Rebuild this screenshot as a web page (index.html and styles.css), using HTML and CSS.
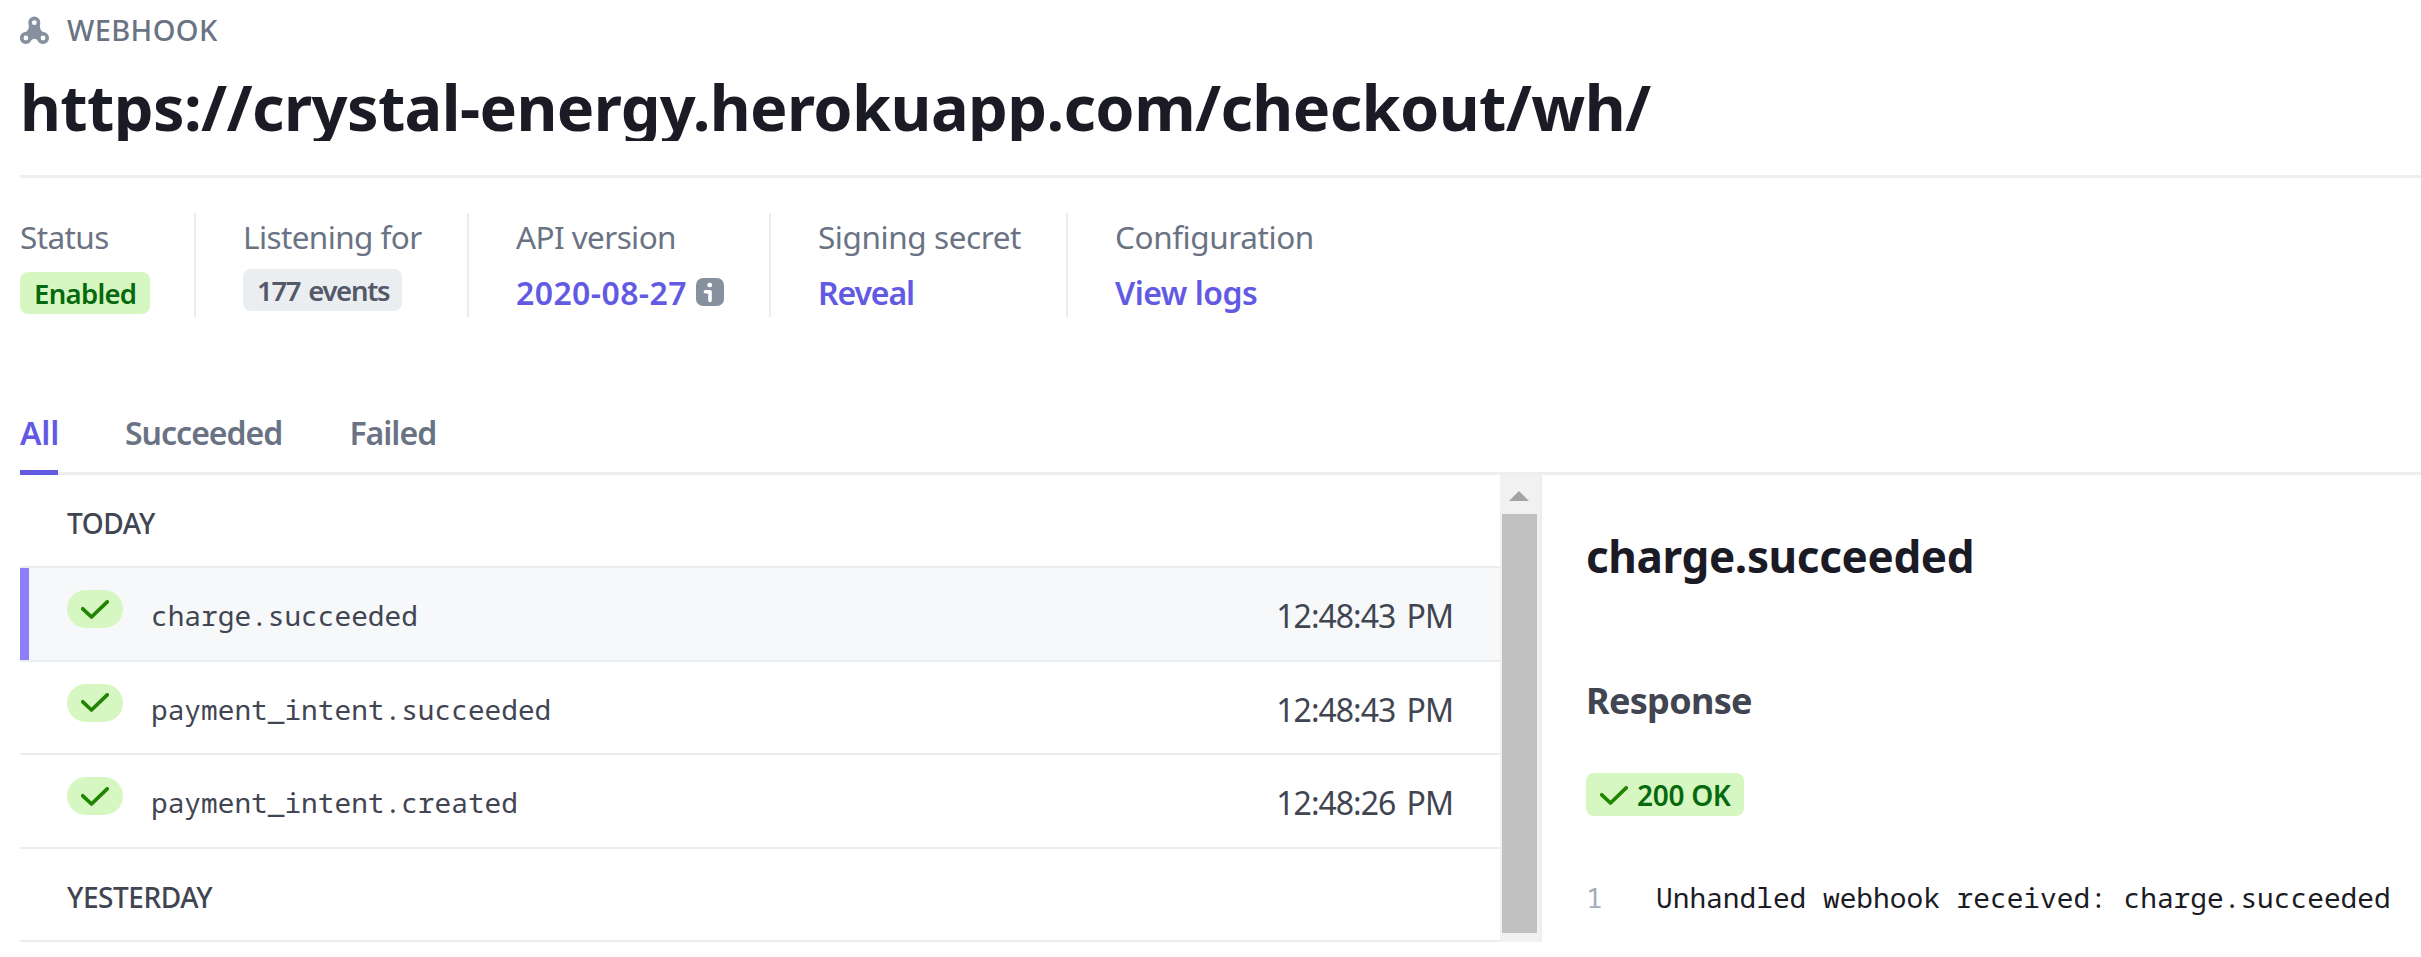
FILE: index.html
```html
<!DOCTYPE html>
<html lang="en">
<head>
<meta charset="utf-8">
<title>Webhook</title>
<link rel="stylesheet" href="styles.css">
</head>
<body>
<svg class="defs" aria-hidden="true">
  <symbol id="check" viewBox="0 0 28 19"><path d="M1.8 8.8 10.5 17 26.2 1.9" fill="none" stroke="currentColor" stroke-width="3.7" stroke-linecap="round" stroke-linejoin="round"/></symbol>
</svg>
<main class="page">
  <header class="header">
    <div class="eyebrow">
      <svg class="hook-icon" viewBox="0 0 29 29"><path d="M14.3.6a6 6 0 0 1 6 6c0 1.8-.6 2.7-.4 4.2.3 2.600 1.300 4.300 3.300 5.200A6 6 0 1 1 17.800 25c-.6-1.300-1.700-1.900-3.400-1.900s-2.800.6-3.400 1.900A6 6 0 1 1 5.500 16c2-.9 3-2.600 3.300-5.200.2-1.500-.5-2.400-.5-4.200a6 6 0 0 1 6-6z" fill="#87909f"/><circle cx="14.300" cy="6.700" r="2.400" fill="#fff"/><circle cx="5.900" cy="22" r="2.400" fill="#fff"/><circle cx="23" cy="22" r="2.400" fill="#fff"/></svg>
      <span>WEBHOOK</span>
    </div>
    <h1 class="title">https://crystal-energy.herokuapp.com/checkout/wh/</h1>
  </header>

  <section class="stats">
    <div class="stat"><div class="label">Status</div><span class="badge enabled">Enabled</span></div>
    <div class="stat"><div class="label">Listening for</div><span class="badge events">177 events</span></div>
    <div class="stat"><div class="label">API version</div>
      <div class="value"><a class="link version">2020-08-27</a>
        <svg class="info-icon" viewBox="0 0 28 28"><rect width="28" height="28" rx="7" fill="#87909f"/><rect x="11.400" y="4.700" width="4.600" height="4.600" rx="1.800" fill="#fff"/><path d="M9.400 13.700h4.600V22.500" fill="none" stroke="#fff" stroke-width="3.600" stroke-linecap="round" stroke-linejoin="round"/></svg>
      </div></div>
    <div class="stat"><div class="label secret">Signing secret</div><div class="value"><a class="link">Reveal</a></div></div>
    <div class="stat"><div class="label secret">Configuration</div><div class="value"><a class="link logs">View logs</a></div></div>
  </section>

  <nav class="tabs">
    <a class="tab active">All</a><a class="tab">Succeeded</a><a class="tab">Failed</a>
  </nav>

  <div class="panels">
    <div class="list">
      <div class="row group">TODAY</div>
      <div class="row event selected"><span class="pill"><svg class="check"><use href="#check"/></svg></span><span class="name">charge.succeeded</span><time class="time">12:48:43 PM</time></div>
      <div class="row event"><span class="pill"><svg class="check"><use href="#check"/></svg></span><span class="name">payment_intent.succeeded</span><time class="time">12:48:43 PM</time></div>
      <div class="row event"><span class="pill"><svg class="check"><use href="#check"/></svg></span><span class="name">payment_intent.created</span><time class="time">12:48:26 PM</time></div>
      <div class="row group">YESTERDAY</div>
    </div>
    <div class="scrollbar">
      <svg class="arrow" viewBox="0 0 20 10"><path d="M0 10 10 0 20 10z" fill="#a3a3a3"/></svg>
      <div class="thumb"></div>
    </div>
    <section class="detail">
      <h2 class="detail-title">charge.succeeded</h2>
      <h3 class="detail-heading">Response</h3>
      <span class="badge code-badge"><svg class="check"><use href="#check"/></svg>200 OK</span>
      <div class="code"><span class="line-no">1</span><span>Unhandled webhook received: charge.succeeded</span></div>
    </section>
  </div>
</main>
</body>
</html>
```
FILE: styles.css
```css
* { box-sizing: border-box; }
body { margin: 0; background: #fff; font-family: "Noto Sans", "Open Sans", sans-serif; color: #414552; overflow: hidden; }
.defs { display: none; }
.page { padding-left: 20px; width: 2421px; height: 957px; white-space: nowrap; }

.header { height: 178px; border-bottom: 3px solid #eeeef0; }
.eyebrow { display: flex; height: 60px; gap: 18px; font-size: 29px; font-weight: 500; line-height: 60px; letter-spacing: .4px; color: #6a7383; }
.hook-icon { width: 29px; height: 29px; margin-top: 16px; }
.title { margin: 0; height: 81px; overflow: hidden; font-size: 63px; font-weight: 700; line-height: 93px; letter-spacing: -.62px; color: #1a1b25; }

.stats { display: grid; grid-template-columns: 176px 273px 302px 297px auto; height: 102px; margin-top: 35px; }
.stat { padding-left: 47px; border-right: 2px solid #ebeef1; }
.stat:first-child { padding-left: 0; }
.stat:last-child { border-right: 0; }
.label { font-size: 31.5px; line-height: 48px; letter-spacing: -.6px; color: #6a7383; }
.label.secret { letter-spacing: -.42px; }
.badge { display: inline-flex; align-items: center; padding: 0 14px; border-radius: 8px; font-size: 27.5px; font-weight: 600; line-height: 42px; letter-spacing: -.7px; }
.enabled { width: 130px; height: 42px; margin-top: 11px; padding-top: 2px; background: #d7f7c2; color: #05690d; }
.events { width: 159px; height: 42px; margin-top: 8px; padding-top: 2px; background: #ebeef1; color: #545969; letter-spacing: -1.3px; word-spacing: 2px; }
.value { display: flex; gap: 9px; margin-top: 8px; }
.link { font-size: 32px; font-weight: 600; line-height: 48px; letter-spacing: -1.1px; color: #625ae2; }
.version { letter-spacing: .4px; }
.logs { letter-spacing: -.5px; }
.info-icon { width: 28px; height: 28px; margin-top: 9px; }

.tabs { display: flex; gap: 67px; height: 85px; margin-top: 75px; box-shadow: inset 0 -3px #eeeef0; }
.tab { height: 85px; font-size: 32px; font-weight: 600; line-height: 86px; letter-spacing: -1px; color: #6a7383; }
.tab.active { width: 38px; border-bottom: 5px solid #625ae2; letter-spacing: -.2px; color: #625ae2; }

.panels { display: flex; height: 467px; }
.list { width: 1480px; display: grid; grid-template-rows: 93px repeat(4, 93.5px); }
.row { border-bottom: 2px solid #ebeef1; padding-left: 47px; }
.group { padding-top: 3px; font-size: 28px; font-weight: 500; line-height: 91px; letter-spacing: -.45px; }
.event { display: flex; align-items: flex-start; padding-right: 47px; }
.selected { background: linear-gradient(90deg, #8d7ffa 9px, #f6f8fa 9px); }
.pill { display: flex; align-items: center; justify-content: center; width: 56px; height: 38px; margin-top: 22px; border-radius: 19px; background: #d7f7c2; }
.check { width: 28px; height: 19px; color: #228403; }
.name { margin-left: 28px; font-family: "Noto Sans Mono", "DejaVu Sans Mono", monospace; font-size: 27.8px; line-height: 94px; }
.time { margin-left: auto; font-size: 32px; font-weight: 400; line-height: 95px; letter-spacing: -1px; word-spacing: 4px; }

.scrollbar { display: flex; flex-direction: column; width: 42px; padding-left: 2px; background: #f1f1f1; border-right: 2px solid #ebeef1; }
.arrow { width: 20px; height: 10px; margin: 16px 0 13px 7px; }
.thumb { width: 35px; height: 419px; background: #c1c1c1; }

.detail { padding: 57px 0 0 44px; }
.detail-title { margin: 0; font-size: 44px; font-weight: 700; line-height: 48px; letter-spacing: -.35px; color: #1a1b25; }
.detail-heading { margin: 101px 0 52px; font-size: 36px; font-weight: 700; line-height: 40px; letter-spacing: -.7px; }
.code-badge { display: flex; width: 158px; height: 43px; padding: 1px 0 0 14px; gap: 9px; background: #d7f7c2; color: #05690d; font-size: 28px; letter-spacing: -.3px; }
.code { display: flex; gap: 53.3px; margin-top: 61px; font-family: "Noto Sans Mono", "DejaVu Sans Mono", monospace; font-size: 27.83px; line-height: 40px; color: #1a1b25; }
.line-no { color: #a3acba; }
```
